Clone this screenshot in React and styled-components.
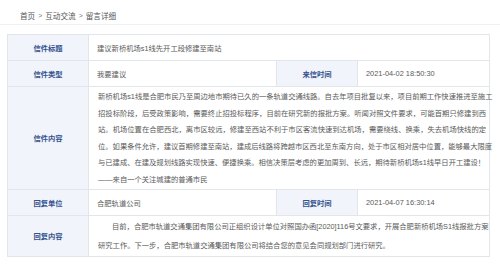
import React from "react";
import styled, { createGlobalStyle } from "styled-components";

const Global = createGlobalStyle`
  html, body { margin: 0; padding: 0; background: #ffffff; }
  body {
    font-family: "Liberation Sans", "Noto Sans CJK SC", sans-serif;
    color: #555;
  }
`;

const Page = styled.div`
  width: 500px;
  height: 267px;
  overflow: hidden;
  background: #fff;
`;

const Breadcrumb = styled.div`
  height: 25px;
  display: flex;
  align-items: center;
  padding: 6px 0 0 20px;
  font-size: 7.6px;
  color: #555;
  border-bottom: 1px solid #f0f0f0;
  box-sizing: border-box;
  gap: 3px;
`;

const Sep = styled.span`
  color: #777;
  font-size: 7px;
`;

const Card = styled.div`
  padding: 9px 10px 0 7px;
`;

const Table = styled.div`
  display: grid;
  grid-template-columns: 81px 188px 81px 1fr;
  border-top: 1px solid #e2e5ea;
  border-left: 1px solid #e2e5ea;
  width: 483px;
  box-sizing: border-box;
`;

const Label = styled.div`
  background: #f1f4fa;
  color: #34528f;
  font-weight: bold;
  font-size: 7.3px;
  display: flex;
  align-items: center;
  justify-content: center;
  border-right: 1px solid #e2e5ea;
  border-bottom: 1px solid #e2e5ea;
  height: ${(p) => p.$h}px;
  box-sizing: border-box;
`;

const Value = styled.div`
  grid-column: span ${(p) => p.$span || 1};
  font-size: 7.3px;
  color: #5a5a5a;
  display: flex;
  align-items: center;
  padding-left: 8px;
  border-right: 1px solid #e2e5ea;
  border-bottom: 1px solid #e2e5ea;
  box-sizing: border-box;
  height: ${(p) => p.$h}px;
`;

const Date = styled(Value)`
  font-family: "Liberation Sans", sans-serif;
  font-size: 7.4px;
`;

const Content = styled.div`
  grid-column: span 3;
  font-size: 7.3px;
  color: #5a5a5a;
  padding: ${(p) => p.$pad};
  border-right: 1px solid #e2e5ea;
  border-bottom: 1px solid #e2e5ea;
  box-sizing: border-box;
  height: ${(p) => p.$h}px;
`;

const Line = styled.div`
  line-height: ${(p) => p.$lh}px;
  height: ${(p) => p.$lh}px;
  white-space: nowrap;
  text-align: justify;
  text-align-last: ${(p) => (p.$full ? "justify" : "left")};
  padding-left: ${(p) => p.$indent || 0}px;
`;

export default function App() {
  return (
    <Page>
      <Global />
      <Breadcrumb>
        <span>首页</span>
        <Sep>&gt;</Sep>
        <span>互动交流</span>
        <Sep>&gt;</Sep>
        <span>留言详细</span>
      </Breadcrumb>
      <Card>
        <Table>
          <Label $h={26}>信件标题</Label>
          <Value $span={3} $h={26}>建议新桥机场s1线先开工段修建至南站</Value>

          <Label $h={26}>信件类型</Label>
          <Value $h={26}>我要建议</Value>
          <Label $h={26}>来信时间</Label>
          <Date $h={26}>2021-04-02 18:50:30</Date>

          <Label $h={103}>信件内容</Label>
          <Content $span={3} $h={103} $pad="2px 3px 0 9px">
            <Line $lh={16.5} $full>新桥机场s1线是合肥市民乃至周边地市期待已久的一条轨道交通线路。自去年项目批复以来，项目前期工作快速推进至施工</Line>
            <Line $lh={16.5} $full>招投标阶段，后受政策影响，需要终止招投标程序，目前在研究新的报批方案。听闻对照文件要求，可能首期只修建到西</Line>
            <Line $lh={16.5} $full>站。机场位置在合肥西北，离市区较远，修建至西站不利于市区客流快速到达机场，需要绕线、换乘，失去机场快线的定</Line>
            <Line $lh={16.5} $full>位。如果条件允许，建议首期修建至南站，建成后线路将跨越市区西北至东南方向，处于市区相对居中位置，能够最大限度</Line>
            <Line $lh={16.5}>与已建成、在建及规划线路实现快速、便捷换乘。相信决策层考虑的更加周到、长远，期待新桥机场s1线早日开工建设！</Line>
            <Line $lh={16.5}>——来自一个关注城建的普通市民</Line>
          </Content>

          <Label $h={26}>回复单位</Label>
          <Value $h={26}>合肥轨道公司</Value>
          <Label $h={26}>回复时间</Label>
          <Date $h={26}>2021-04-07 16:30:14</Date>

          <Label $h={41}>回复内容</Label>
          <Content $span={3} $h={41} $pad="1px 12px 0 9px">
            <Line $lh={19} $indent={14}>目前，合肥市轨道交通集团有限公司正组织设计单位对照国办函[2020]116号文要求，开展合肥新桥机场S1线报批方案</Line>
            <Line $lh={19}>研究工作。下一步，合肥市轨道交通集团有限公司将结合您的意见会同规划部门进行研究。</Line>
          </Content>
        </Table>
      </Card>
    </Page>
  );
}
